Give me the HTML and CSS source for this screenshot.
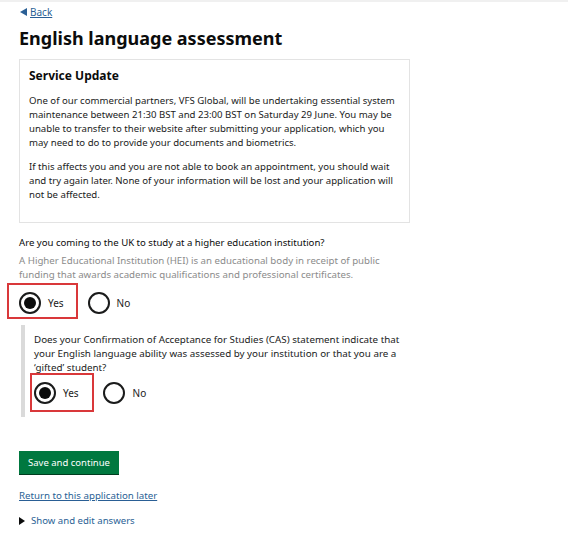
FILE: index.html
```html
<!DOCTYPE html>
<html lang="en">
<head>
<meta charset="utf-8">
<title>English language assessment</title>
<link rel="stylesheet" href="styles.css">
</head>
<body>
<div class="topline"></div>
<main class="page">
  <a class="back" href="#"><span class="back-tri"></span>Back</a>
  <h1 class="title">English language assessment</h1>

  <section class="notice">
    <h2 class="notice-title">Service Update</h2>
    <p class="notice-text">One of our commercial partners, VFS Global, will be undertaking essential system maintenance between 21:30 BST and 23:00 BST on Saturday 29 June. You may be unable to transfer to their website after submitting your application, which you may need to do to provide your documents and biometrics.</p>
    <p class="notice-text">If this affects you and you are not able to book an appointment, you should wait and try again later. None of your information will be lost and your application will not be affected.</p>
  </section>

  <div class="question">
    <p class="q-label">Are you coming to the UK to study at a higher education institution?</p>
    <p class="q-hint">A Higher Educational Institution (HEI) is an educational body in receipt of public funding that awards academic qualifications and professional certificates.</p>
    <div class="radios radios-main">
      <div class="radio highlighted"><span class="circle checked"></span><span class="radio-label">Yes</span></div>
      <div class="radio plain"><span class="circle"></span><span class="radio-label">No</span></div>
    </div>
  </div>

  <div class="conditional">
    <p class="c-label">Does your Confirmation of Acceptance for Studies (CAS) statement indicate that your English language ability was assessed by your institution or that you are a ‘gifted’ student?</p>
    <div class="radios radios-cond">
      <div class="radio highlighted"><span class="circle checked"></span><span class="radio-label">Yes</span></div>
      <div class="radio plain"><span class="circle"></span><span class="radio-label">No</span></div>
    </div>
  </div>

  <button class="btn" type="button">Save and continue</button>

  <a class="later" href="#">Return to this application later</a>

  <div class="details"><span class="details-tri"></span>Show and edit answers</div>
</main>
</body>
</html>
```

FILE: styles.css
```css
* { box-sizing: border-box; }
html, body { margin: 0; padding: 0; background: #ffffff; }
body {
  font-family: "Noto Sans", "Liberation Sans", sans-serif;
  color: #1a1b1b;
  width: 573px;
  height: 540px;
  overflow: hidden;
}
.topline {
  height: 2px;
  width: 568px;
  border-top: 2px solid #f0f0f0;
}
.page {
  padding-left: 19px;
  display: flex;
  flex-direction: column;
  align-items: flex-start;
}
.back {
  display: flex;
  align-items: center;
  gap: 3px;
  margin-top: 3px;
  font-size: 10px;
  line-height: 14px;
  color: #2a5f95;
  text-decoration: underline;
}
.back-tri {
  width: 0; height: 0;
  border-top: 4px solid transparent;
  border-bottom: 4px solid transparent;
  border-right: 7px solid #2a5f95;
  margin-left: 1px;
}
.title {
  margin: 6px 0 0;
  font-size: 18px;
  line-height: 26px;
  font-weight: 700;
  color: #0b0c0c;
}
.notice {
  margin-top: 8px;
  width: 391px;
  height: 164px;
  border: 1px solid #e3e3e3;
  padding: 8px 10px 0 9px;
}
.notice-title {
  margin: 0;
  font-size: 12px;
  line-height: 16px;
  font-weight: 700;
  color: #0b0c0c;
}
.notice-text {
  margin: 10px 0 0;
  font-size: 9.6px;
  line-height: 14px;
}
.question { margin-top: 13px; width: 400px; }
.q-label {
  margin: 0;
  font-size: 9.6px;
  line-height: 14px;
  color: #0b0c0c;
}
.q-hint {
  margin: 4px 0 0;
  font-size: 9.7px;
  line-height: 14px;
  color: #8b8b8b;
  width: 370px;
}
.radios {
  display: flex;
  align-items: center;
}
.radio {
  display: flex;
  align-items: center;
  font-size: 10px;
}
.radio.highlighted { border: 2px solid #d9383a; }
.radios-main { margin-top: 1px; margin-left: -12px; }
.radios-main .highlighted { height: 36px; padding: 3px 12px 0 10px; }
.radios-main .plain { margin-left: 10px; padding-top: 3px; }
.radios-cond { margin-top: -2px; margin-left: -4px; }
.radios-cond .highlighted { height: 39px; padding: 1px 13px 0 2px; }
.radios-cond .plain { margin-left: 9px; }
.radios-cond .plain .radio-label { margin-left: 8px; }
.circle {
  width: 22px;
  height: 22px;
  border: 2px solid #1a1b1b;
  border-radius: 50%;
  display: flex;
  align-items: center;
  justify-content: center;
  flex: none;
}
.circle.checked::after {
  content: "";
  width: 12px;
  height: 12px;
  border-radius: 50%;
  background: #0b0c0c;
}
.radio-label { margin-left: 7px; }
.conditional {
  margin-top: 6px;
  margin-left: 2px;
  border-left: 4px solid #dadada;
  padding: 8px 0 5px 9px;
  width: 400px;
}
.c-label {
  margin: 0;
  font-size: 9.8px;
  line-height: 14px;
  width: 375px;
}
.btn {
  margin-top: 34px;
  width: 100px;
  height: 23px;
  border: none;
  background: #00783f;
  color: #ffffff;
  font-family: inherit;
  font-size: 9.5px;
  padding: 0;
  box-shadow: 0 1px 0 #003c1f;
}
.later {
  margin-top: 15px;
  font-size: 9.7px;
  line-height: 14px;
  color: #2a5f95;
  text-decoration: underline;
}
.details {
  margin-top: 11px;
  display: flex;
  align-items: center;
  gap: 6px;
  font-size: 9.6px;
  line-height: 14px;
  color: #2a5f95;
}
.details-tri {
  width: 0; height: 0;
  border-top: 4px solid transparent;
  border-bottom: 4px solid transparent;
  border-left: 6px solid #0b0c0c;
}
```
